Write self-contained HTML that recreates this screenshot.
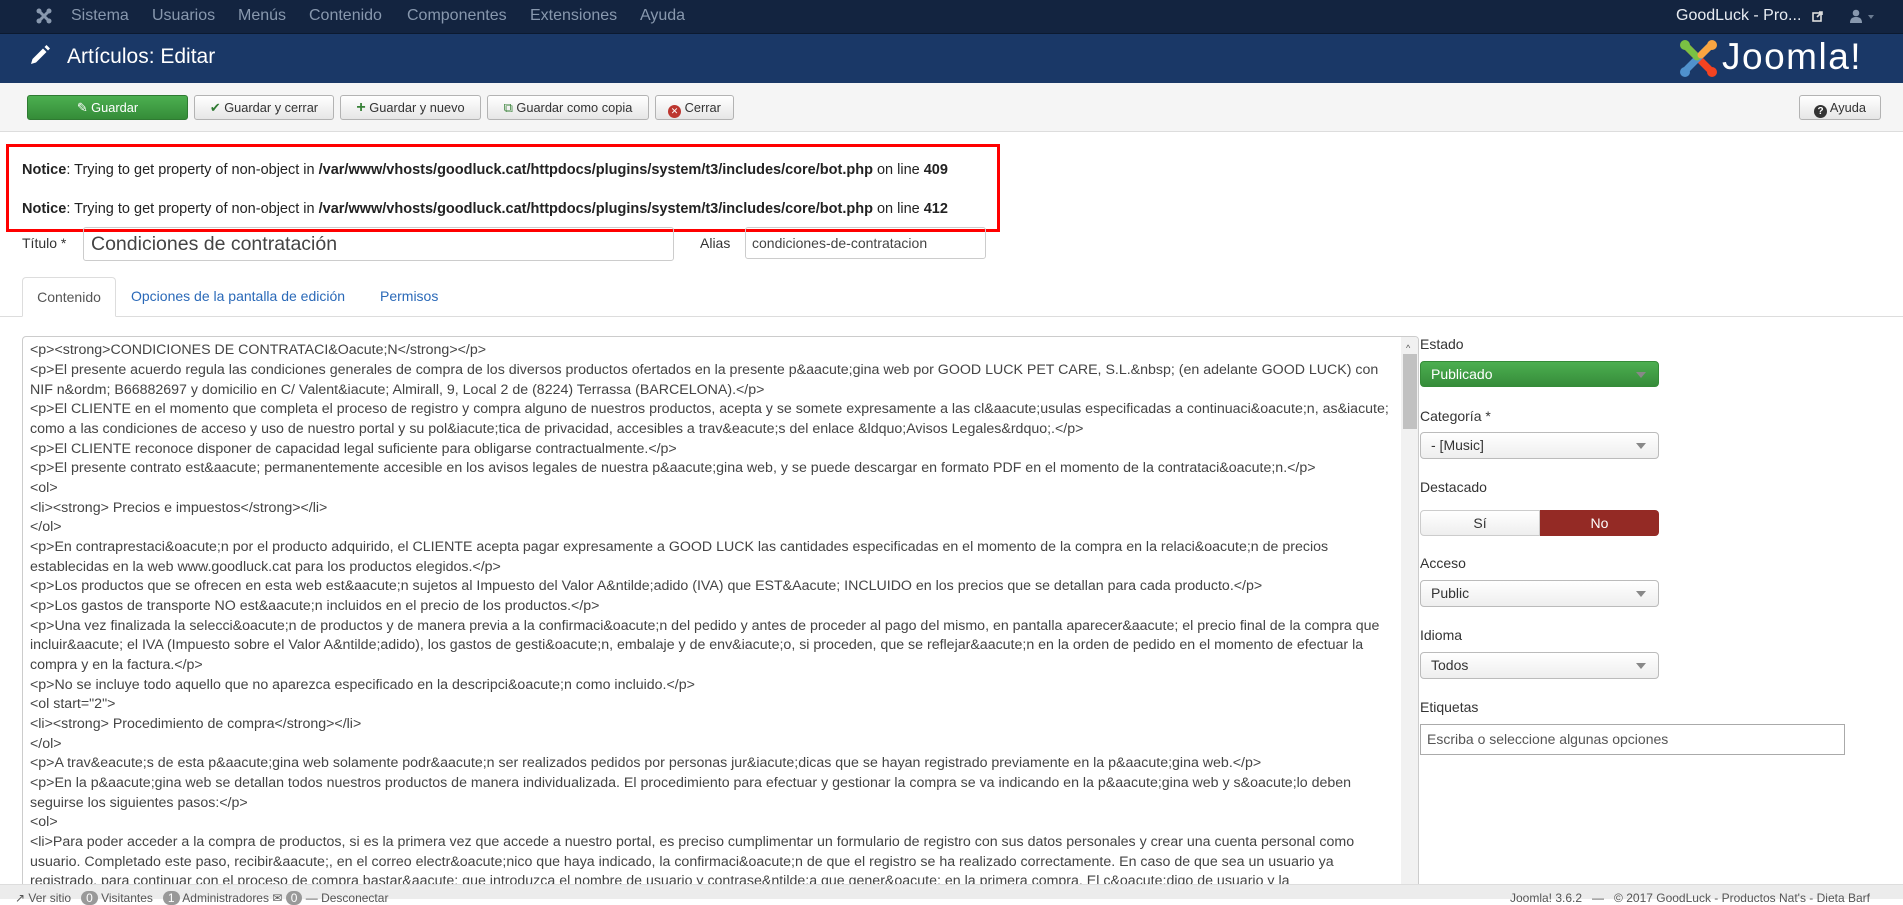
<!DOCTYPE html>
<html><head><meta charset="utf-8"><style>
*{box-sizing:border-box;margin:0;padding:0}
body{width:1903px;height:899px;overflow:hidden;background:#fff;font-family:"Liberation Sans",Arial,sans-serif;color:#333;position:relative}
.abs{position:absolute}
#nav{left:0;top:0;width:1903px;height:34px;background:#132440;border-bottom:1px solid #0c1a30}
#nav span.m{position:absolute;top:7px;font-size:16px;color:#8898ae}
#hdr{left:0;top:34px;width:1903px;height:49px;background:#1a3867}
#tb{left:0;top:83px;width:1903px;height:49px;background:#f5f5f5;border-bottom:1px solid #ddd}
.btn{position:absolute;top:95px;height:25px;border:1px solid #b3b3b3;border-radius:3px;background:linear-gradient(#fff,#e6e6e6);font-size:12.8px;color:#333;line-height:23px;text-align:center;white-space:nowrap}
.btn b{font-weight:normal}
.lbl{position:absolute;font-size:14px;color:#333}
.sel{position:absolute;left:1420px;width:239px;height:27px;border:1px solid #bbb;border-radius:4px;background:linear-gradient(#fff,#eee);font-size:14px;line-height:25px;padding-left:10px;color:#333}
.sel:after{content:"";position:absolute;right:12px;top:10px;border-left:5px solid transparent;border-right:5px solid transparent;border-top:6px solid #888}
#ta{left:22px;top:336px;width:1397px;height:560px;border:1px solid #ccc;border-radius:4px;overflow:hidden;background:#fff}
#ta .l{position:absolute;left:7px;font-size:14.2px;white-space:nowrap;color:#444;line-height:20px}
#foot{left:0;top:884px;width:1903px;height:15px;background:#ececec;border-top:1px solid #ddd;font-size:12px;color:#555}
.nt{position:absolute;left:22px;font-size:14.5px;color:#222;white-space:nowrap}
</style></head><body>
<div id="nav" class="abs">
<svg class="abs" style="left:36px;top:8px" width="16" height="16" viewBox="0 0 16 16"><g fill="#8898ae"><circle cx="3" cy="3" r="2.5"/><circle cx="13" cy="3" r="2.5"/><circle cx="3" cy="13" r="2.5"/><circle cx="13" cy="13" r="2.5"/><path d="M3 3L13 13M13 3L3 13" stroke="#8898ae" stroke-width="3"/></g></svg>
<span class="m" style="left:71px">Sistema</span><span class="m" style="left:152px">Usuarios</span><span class="m" style="left:238px">Menús</span><span class="m" style="left:309px">Contenido</span><span class="m" style="left:407px">Componentes</span><span class="m" style="left:530px">Extensiones</span><span class="m" style="left:640px">Ayuda</span>
<span class="m" style="left:1676px;color:#e8ecf2">GoodLuck - Pro...</span>
<svg class="abs" style="left:1812px;top:11px" width="11" height="11" viewBox="0 0 11 11"><rect x="1" y="2" width="8" height="8" fill="none" stroke="#ddd" stroke-width="1.6"/><path d="M5 6L10 1M7 1h3v3" stroke="#ddd" stroke-width="1.6" fill="none"/></svg>
<svg class="abs" style="left:1849px;top:9px" width="14" height="14" viewBox="0 0 14 14"><circle cx="7" cy="4" r="3.3" fill="#8898ae"/><path d="M1 14c0-5 3-6 6-6s6 1 6 6z" fill="#8898ae"/></svg>
<div class="abs" style="left:1868px;top:15px;border-left:3px solid transparent;border-right:3px solid transparent;border-top:4px solid #6a7a90"></div>
</div>
<div id="hdr" class="abs">
<svg class="abs" style="left:27px;top:10px" width="24" height="24" viewBox="0 0 24 24"><path d="M4 20l1.5-5L16 4.5l3.5 3.5L9 18.5z" fill="#fff"/><path d="M17.5 3l2-2 3.5 3.5-2 2z" fill="#fff"/></svg>
<div class="abs" style="left:67px;top:11px;font-size:21px;color:#fff">Artículos: Editar</div>
<svg class="abs" style="left:1679px;top:5px" width="40" height="40" viewBox="0 0 40 40">
<path d="M8 8L30 30" stroke="#f44321" stroke-width="7" stroke-linecap="round"/>
<path d="M30 8L8 30" stroke="#5091cd" stroke-width="7" stroke-linecap="round"/>
<path d="M8 8L18 18" stroke="#7ac143" stroke-width="7" stroke-linecap="round"/>
<path d="M30 8L22 16" stroke="#f9a541" stroke-width="7" stroke-linecap="round"/>
<circle cx="6" cy="6" r="5" fill="#7ac143"/><circle cx="33" cy="6" r="5" fill="#f9a541"/><circle cx="6" cy="33" r="5" fill="#5091cd"/><circle cx="33" cy="33" r="5" fill="#f44321"/></svg>
<div class="abs" style="left:1722px;top:2px;font-size:37px;color:#fff;letter-spacing:1.5px">Joomla!</div>
</div>
<div id="tb" class="abs"></div>
<div class="btn" style="left:27px;width:161px;background:linear-gradient(#4caf50,#358c38);border-color:#2f7a32;color:#fff"><b>&#9998; Guardar</b></div>
<div class="btn" style="left:194px;width:140px"><span style="color:#2f7a32">✔</span> Guardar y cerrar</div>
<div class="btn" style="left:340px;width:141px"><span style="color:#378137;font-weight:bold;font-size:16px">+</span> Guardar y nuevo</div>
<div class="btn" style="left:487px;width:162px"><span style="color:#378137">⧉</span> Guardar como copia</div>
<div class="btn" style="left:655px;width:79px"><span style="display:inline-block;width:13px;height:13px;border-radius:50%;background:#bd362f;color:#fff;font-size:9px;line-height:13px;vertical-align:-2px">✕</span> Cerrar</div>
<div class="btn" style="left:1799px;width:82px"><span style="display:inline-block;width:13px;height:13px;border-radius:50%;background:#333;color:#fff;font-size:10px;line-height:13px;font-weight:bold;vertical-align:-2px">?</span> Ayuda</div>

<div class="abs" style="left:6px;top:144px;width:994px;height:88px;border:3px solid #f00"></div>
<div class="nt" style="top:162px"><b>Notice</b>: Trying to get property of non-object in <b>/var/www/vhosts/goodluck.cat/httpdocs/plugins/system/t3/includes/core/bot.php</b> on line <b>409</b></div>
<div class="nt" style="top:201px"><b>Notice</b>: Trying to get property of non-object in <b>/var/www/vhosts/goodluck.cat/httpdocs/plugins/system/t3/includes/core/bot.php</b> on line <b>412</b></div>

<div class="lbl" style="left:22px;top:235px">Título *</div>
<div class="abs" style="left:83px;top:227px;width:591px;height:34px;border:1px solid #ccc;border-radius:3px;font-size:19.5px;line-height:32px;padding-left:7px;color:#444">Condiciones de contratación</div>
<div class="lbl" style="left:700px;top:235px">Alias</div>
<div class="abs" style="left:745px;top:227px;width:241px;height:32px;border:1px solid #ccc;border-radius:3px;font-size:14px;line-height:30px;padding-left:6px;color:#444">condiciones-de-contratacion</div>

<div class="abs" style="left:0;top:316px;width:1903px;border-top:1px solid #ddd"></div>
<div class="abs" style="left:22px;top:277px;width:94px;height:40px;border:1px solid #ddd;border-bottom:1px solid #fff;border-radius:4px 4px 0 0;background:#fff;font-size:14px;line-height:38px;text-align:center;color:#555">Contenido</div>
<div class="lbl" style="left:131px;top:288px;color:#2a69b8">Opciones de la pantalla de edición</div>
<div class="lbl" style="left:380px;top:288px;color:#2a69b8">Permisos</div>

<div id="ta" class="abs">
<div class="l" style="top:3px">&lt;p&gt;&lt;strong&gt;CONDICIONES DE CONTRATACI&amp;Oacute;N&lt;/strong&gt;&lt;/p&gt;</div>
<div class="l" style="top:23px">&lt;p&gt;El presente acuerdo regula las condiciones generales de compra de los diversos productos ofertados en la presente p&amp;aacute;gina web por GOOD LUCK PET CARE, S.L.&amp;nbsp; (en adelante GOOD LUCK) con</div>
<div class="l" style="top:43px">NIF n&amp;ordm; B66882697 y domicilio en C/ Valent&amp;iacute; Almirall, 9, Local 2 de (8224) Terrassa (BARCELONA).&lt;/p&gt;</div>
<div class="l" style="top:62px">&lt;p&gt;El CLIENTE en el momento que completa el proceso de registro y compra alguno de nuestros productos, acepta y se somete expresamente a las cl&amp;aacute;usulas especificadas a continuaci&amp;oacute;n, as&amp;iacute;</div>
<div class="l" style="top:82px">como a las condiciones de acceso y uso de nuestro portal y su pol&amp;iacute;tica de privacidad, accesibles a trav&amp;eacute;s del enlace &amp;ldquo;Avisos Legales&amp;rdquo;.&lt;/p&gt;</div>
<div class="l" style="top:102px">&lt;p&gt;El CLIENTE reconoce disponer de capacidad legal suficiente para obligarse contractualmente.&lt;/p&gt;</div>
<div class="l" style="top:121px">&lt;p&gt;El presente contrato est&amp;aacute; permanentemente accesible en los avisos legales de nuestra p&amp;aacute;gina web, y se puede descargar en formato PDF en el momento de la contrataci&amp;oacute;n.&lt;/p&gt;</div>
<div class="l" style="top:141px">&lt;ol&gt;</div>
<div class="l" style="top:161px">&lt;li&gt;&lt;strong&gt; Precios e impuestos&lt;/strong&gt;&lt;/li&gt;</div>
<div class="l" style="top:180px">&lt;/ol&gt;</div>
<div class="l" style="top:200px">&lt;p&gt;En contraprestaci&amp;oacute;n por el producto adquirido, el CLIENTE acepta pagar expresamente a GOOD LUCK las cantidades especificadas en el momento de la compra en la relaci&amp;oacute;n de precios</div>
<div class="l" style="top:220px">establecidas en la web www.goodluck.cat para los productos elegidos.&lt;/p&gt;</div>
<div class="l" style="top:239px">&lt;p&gt;Los productos que se ofrecen en esta web est&amp;aacute;n sujetos al Impuesto del Valor A&amp;ntilde;adido (IVA) que EST&amp;Aacute; INCLUIDO en los precios que se detallan para cada producto.&lt;/p&gt;</div>
<div class="l" style="top:259px">&lt;p&gt;Los gastos de transporte NO est&amp;aacute;n incluidos en el precio de los productos.&lt;/p&gt;</div>
<div class="l" style="top:279px">&lt;p&gt;Una vez finalizada la selecci&amp;oacute;n de productos y de manera previa a la confirmaci&amp;oacute;n del pedido y antes de proceder al pago del mismo, en pantalla aparecer&amp;aacute; el precio final de la compra que</div>
<div class="l" style="top:298px">incluir&amp;aacute; el IVA (Impuesto sobre el Valor A&amp;ntilde;adido), los gastos de gesti&amp;oacute;n, embalaje y de env&amp;iacute;o, si proceden, que se reflejar&amp;aacute;n en la orden de pedido en el momento de efectuar la</div>
<div class="l" style="top:318px">compra y en la factura.&lt;/p&gt;</div>
<div class="l" style="top:338px">&lt;p&gt;No se incluye todo aquello que no aparezca especificado en la descripci&amp;oacute;n como incluido.&lt;/p&gt;</div>
<div class="l" style="top:357px">&lt;ol start="2"&gt;</div>
<div class="l" style="top:377px">&lt;li&gt;&lt;strong&gt; Procedimiento de compra&lt;/strong&gt;&lt;/li&gt;</div>
<div class="l" style="top:397px">&lt;/ol&gt;</div>
<div class="l" style="top:416px">&lt;p&gt;A trav&amp;eacute;s de esta p&amp;aacute;gina web solamente podr&amp;aacute;n ser realizados pedidos por personas jur&amp;iacute;dicas que se hayan registrado previamente en la p&amp;aacute;gina web.&lt;/p&gt;</div>
<div class="l" style="top:436px">&lt;p&gt;En la p&amp;aacute;gina web se detallan todos nuestros productos de manera individualizada. El procedimiento para efectuar y gestionar la compra se va indicando en la p&amp;aacute;gina web y s&amp;oacute;lo deben</div>
<div class="l" style="top:456px">seguirse los siguientes pasos:&lt;/p&gt;</div>
<div class="l" style="top:475px">&lt;ol&gt;</div>
<div class="l" style="top:495px">&lt;li&gt;Para poder acceder a la compra de productos, si es la primera vez que accede a nuestro portal, es preciso cumplimentar un formulario de registro con sus datos personales y crear una cuenta personal como</div>
<div class="l" style="top:515px">usuario. Completado este paso, recibir&amp;aacute;, en el correo electr&amp;oacute;nico que haya indicado, la confirmaci&amp;oacute;n de que el registro se ha realizado correctamente. En caso de que sea un usuario ya</div>
<div class="l" style="top:534px">registrado, para continuar con el proceso de compra bastar&amp;aacute; que introduzca el nombre de usuario y contrase&amp;ntilde;a que gener&amp;oacute; en la primera compra. El c&amp;oacute;digo de usuario y la</div>
<div class="abs" style="left:1378px;top:0;width:17px;height:560px;background:#f1f1f1"></div>
<div class="abs" style="left:1380px;top:17px;width:14px;height:75px;background:#c1c1c1"></div>
<div class="abs" style="left:1383px;top:6px;font-size:9px;color:#555">&#94;</div>
</div>

<div class="lbl" style="left:1420px;top:336px">Estado</div>
<div class="sel" style="top:361px;height:26px;background:linear-gradient(#4caf50,#368c3a);border-color:#358b38;color:#fff">Publicado</div>
<div class="lbl" style="left:1420px;top:408px">Categoría *</div>
<div class="sel" style="top:432px">- [Music]</div>
<div class="lbl" style="left:1420px;top:479px">Destacado</div>
<div class="abs" style="left:1420px;top:510px;width:120px;height:26px;border:1px solid #ccc;border-radius:4px 0 0 4px;background:linear-gradient(#fff,#eee);font-size:14px;line-height:24px;text-align:center">Sí</div>
<div class="abs" style="left:1540px;top:510px;width:119px;height:26px;background:#942a25;border-radius:0 4px 4px 0;font-size:14px;line-height:26px;text-align:center;color:#fff">No</div>
<div class="lbl" style="left:1420px;top:555px">Acceso</div>
<div class="sel" style="top:580px">Public</div>
<div class="lbl" style="left:1420px;top:627px">Idioma</div>
<div class="sel" style="top:652px">Todos</div>
<div class="lbl" style="left:1420px;top:699px">Etiquetas</div>
<div class="abs" style="left:1420px;top:724px;width:425px;height:31px;border:1px solid #aaa;font-size:14px;line-height:29px;padding-left:6px;color:#555">Escriba o seleccione algunas opciones</div>

<div id="foot" class="abs">
<div class="abs" style="left:15px;top:6px;white-space:nowrap">&#8599; Ver sitio &nbsp; <span style="background:#999;color:#fff;border-radius:8px;padding:0 5px">0</span> Visitantes &nbsp; <span style="background:#999;color:#fff;border-radius:8px;padding:0 5px">1</span> Administradores &#9993; <span style="background:#999;color:#fff;border-radius:8px;padding:0 5px">0</span> &mdash; Desconectar</div>
<div class="abs" style="left:1510px;top:6px;white-space:nowrap">Joomla! 3.6.2 &nbsp; — &nbsp; © 2017 GoodLuck - Productos Nat's - Dieta Barf</div>
</div>
</body></html>
